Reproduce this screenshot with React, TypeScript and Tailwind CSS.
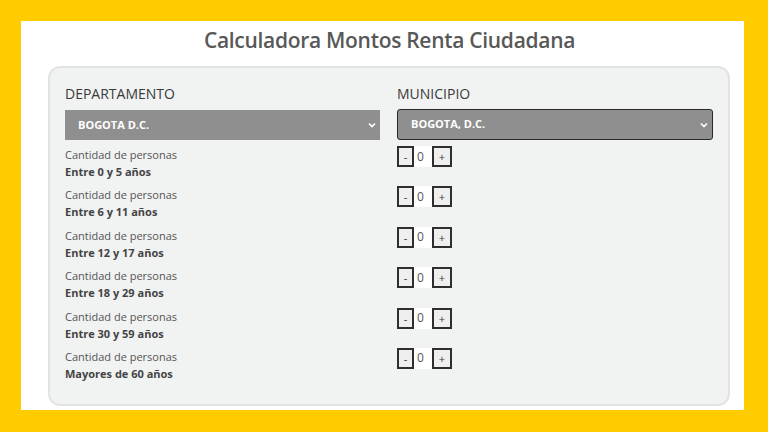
import { useState } from 'react'

const GROUPS = [
  'Entre 0 y 5 años',
  'Entre 6 y 11 años',
  'Entre 12 y 17 años',
  'Entre 18 y 29 años',
  'Entre 30 y 59 años',
  'Mayores de 60 años',
]

function Chevron() {
  return (
    <svg width="8" height="6" viewBox="0 0 8 6" className="text-white">
      <path d="M1 1.5 L4 4.5 L7 1.5" fill="none" stroke="currentColor" strokeWidth="1.6" />
    </svg>
  )
}

function Stepper({ value, onChange }: { value: number; onChange: (v: number) => void }) {
  return (
    <div className="flex items-stretch h-[21px]">
      <button onClick={() => onChange(Math.max(0, value - 1))}
        className="w-[17px] border-2 border-[#2e2e2e] bg-[#efefef] text-[11px] text-[#333] leading-none flex items-center justify-center">
        -
      </button>
      <span className="w-[18px] bg-white text-[12px] text-[#555] flex items-center pl-[3px]">{value}</span>
      <button onClick={() => onChange(value + 1)}
        className="w-[20px] border-2 border-[#2e2e2e] bg-[#efefef] text-[11px] text-[#333] leading-none flex items-center justify-center">
        +
      </button>
    </div>
  )
}

export default function App() {
  const [counts, setCounts] = useState<number[]>(GROUPS.map(() => 0))

  const setCount = (i: number, v: number) =>
    setCounts(prev => prev.map((c, j) => (j === i ? v : c)))

  return (
    <div className="w-[768px] h-[432px] bg-[#ffcc00] p-[21px] font-['Open_Sans',sans-serif]">
      <div className="w-[723px] h-[389px] bg-white pt-[4px]">
        <h1 className="pl-[14px] text-center text-[21px] font-semibold text-[#585858] leading-[30px] tracking-[-0.3px]">
          Calculadora Montos Renta Ciudadana
        </h1>

        <div className="ml-[27px] mt-[11px] w-[682px] h-[340px] rounded-[12px] border-2 border-[#e2e3e3] bg-[#f1f2f2] px-[15px] pt-[16px]">
          <div className="grid grid-cols-[315px_316px] gap-x-[17px]">
            <div>
              <p className="text-[14px] text-[#3a3a3a] leading-[20px]">DEPARTAMENTO</p>
              <div className="mt-[6px] h-[30px] bg-[#8f8f8f] flex items-center justify-between pl-[13px] pr-[4px]">
                <span className="text-[11px] font-bold text-white">BOGOTA D.C.</span>
                <Chevron />
              </div>
            </div>
            <div>
              <p className="text-[14px] text-[#3a3a3a] leading-[20px]">MUNICIPIO</p>
              <div className="mt-[5px] h-[31px] bg-[#8f8f8f] border-[1.5px] border-[#2a2a2a] rounded-[3px] flex items-center justify-between pl-[13px] pr-[4px]">
                <span className="text-[11px] font-bold text-white">BOGOTA, D.C.</span>
                <Chevron />
              </div>
            </div>
          </div>

          <div className="mt-[6px] flex flex-col">
            {GROUPS.map((g, i) => (
              <div key={g} className="grid grid-cols-[315px_316px] gap-x-[17px] h-[40.4px]">
                <div className="text-[11px] leading-[17px] text-[#555]">
                  <p>Cantidad de personas</p>
                  <p className="font-bold text-[#444]">{g}</p>
                </div>
                <div>
                  <Stepper value={counts[i]} onChange={v => setCount(i, v)} />
                </div>
              </div>
            ))}
          </div>
        </div>
      </div>
    </div>
  )
}
